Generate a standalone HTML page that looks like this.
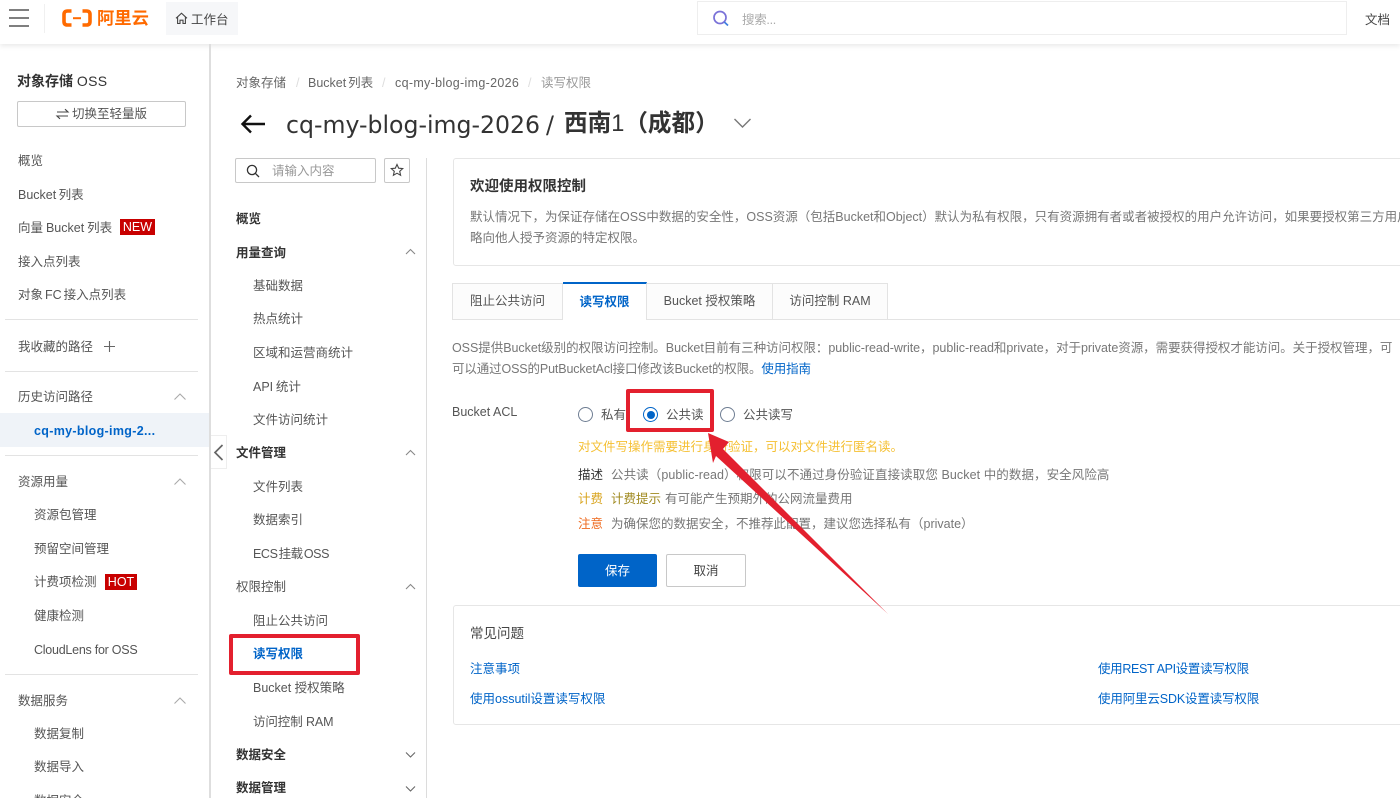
<!DOCTYPE html>
<html lang="zh-CN"><head><meta charset="utf-8"><title>读写权限</title>
<style>
html,body{margin:0;padding:0;background:#fff}
#p{position:relative;width:1400px;height:798px;overflow:hidden;background:#fff;font-family:"Liberation Sans","Noto Sans CJK SC",sans-serif;font-size:12.5px;color:#555}
.t{position:absolute;white-space:nowrap;line-height:18px;height:18px;margin-top:1px}
.b{font-weight:700;color:#333}
.l{color:#0064c8}
.g{color:#777}
.box{position:absolute;box-sizing:border-box}
.hr{position:absolute;height:1px;background:#e3e3e3}
svg{position:absolute;overflow:visible}
.tab{position:absolute;top:283px;height:37px;box-sizing:border-box;border:1px solid #e3e3e3;border-left:0;background:#fcfcfc;line-height:35px;text-align:center;color:#555}
.tag{position:absolute;background:#c80000;color:#fff;line-height:16px;height:16px;text-align:center;font-size:12.5px}
.rad{position:absolute;width:15px;height:15px;box-sizing:border-box;border:1px solid #6e7d92;border-radius:50%;background:#fff}
</style></head><body><div id="p">

<!-- top bar -->
<div class="box" style="left:0;top:0;width:1400px;height:44px;background:#fff;box-shadow:0 2px 5px rgba(0,0,0,.09)"></div>
<svg style="left:0;top:0" width="60" height="44" fill="none" stroke="#555" stroke-width="1.5"><path d="M9 10H29M9 18H29M9 26H29"/></svg>
<div class="box" style="left:44px;top:4px;width:1px;height:29px;background:#f0f0f0"></div>
<svg style="left:62px;top:9px" width="32" height="19" fill="none" stroke="#ff6a00" stroke-width="3.6"><path d="M9.5 2H5.5Q2 2 2 5.5V12.5Q2 16 5.5 16H9.5"/><path d="M20.5 2H24.5Q28 2 28 5.5V12.5Q28 16 24.5 16H20.5"/><path d="M11 9.2H19" stroke-width="2"/></svg>
<div class="t" style="left:97px;top:5px;font-size:17.3px;line-height:24px;height:24px;color:#ff6a00;font-weight:700">阿里云</div>
<div class="box" style="left:166px;top:2px;width:72px;height:33px;background:#f6f7f9"></div>
<svg style="left:175px;top:12px" width="13" height="13" fill="none" stroke="#444" stroke-width="1.1"><path d="M1 6.3L6.5 1.2L12 6.3M2.6 5.2V11.5H5V8.2H8V11.5H10.4V5.2"/></svg>
<div class="t" style="left:191px;top:10px;color:#444;font-size:12.5px">工作台</div>
<div class="box" style="left:697px;top:1px;width:650px;height:34px;border:1px solid #eee;background:#fff"></div>
<svg style="left:712px;top:10px" width="18" height="18" fill="none" stroke-width="1.7"><circle cx="8" cy="7.5" r="6" stroke="#7a72d8"/><path d="M12.3 12L16 15.5" stroke="#3e7fe0"/></svg>
<div class="t" style="left:742px;top:10px;color:#aaa;letter-spacing:-.3px">搜索...</div>
<div class="t" style="left:1365px;top:10px;color:#444">文档</div>

<!-- dividers -->
<div class="box" style="left:209px;top:44px;width:2px;height:754px;background:#dedede"></div>
<div class="box" style="left:426px;top:158px;width:1px;height:640px;background:#dcdcdc"></div>

<!-- left sidebar -->
<div class="t" style="left:17px;top:71px;font-size:14px;font-weight:700;color:#333">对象存储 <span style="font-weight:400;letter-spacing:.3px">OSS</span></div>
<div class="box" style="left:17px;top:101px;width:169px;height:26px;border:1px solid #c8c8c8;border-radius:2px;background:#fff"></div>
<svg style="left:56px;top:108px" width="13" height="12" fill="none" stroke="#444" stroke-width="1.1"><path d="M1 4H12L9 1.2M12 8H1L4 10.8"/></svg>
<div class="t" style="left:72px;top:104px;color:#555">切换至轻量版</div>
<div class="t" style="left:18px;top:151px">概览</div>
<div class="t" style="left:18px;top:185px;word-spacing:-1px">Bucket 列表</div>
<div class="t" style="left:18px;top:218px;word-spacing:-.5px">向量 Bucket 列表</div>
<div class="tag" style="left:120px;top:219px;width:35px">NEW</div>
<div class="t" style="left:18px;top:252px">接入点列表</div>
<div class="t" style="left:18px;top:285px;word-spacing:-1.5px">对象 FC 接入点列表</div>
<div class="hr" style="left:5px;top:319px;width:193px"></div>
<div class="t" style="left:18px;top:337px">我收藏的路径</div>
<svg style="left:103px;top:340px" width="13" height="13" fill="none" stroke="#666" stroke-width="1.1"><path d="M6.5 1V12M1 6.5H12"/></svg>
<div class="hr" style="left:5px;top:371px;width:193px"></div>
<div class="t" style="left:18px;top:387px">历史访问路径</div>
<svg style="left:173px;top:392px" width="14" height="9" fill="none" stroke="#aaa" stroke-width="1.1"><path d="M1.5 7.5L7 2L12.5 7.5"/></svg>
<div class="box" style="left:0;top:413px;width:209px;height:34px;background:#eff3f8"></div>
<div class="t b l" style="left:34px;top:421px;color:#0064c8;letter-spacing:.32px">cq-my-blog-img-2...</div>
<div class="hr" style="left:5px;top:455px;width:193px"></div>
<div class="t" style="left:18px;top:472px">资源用量</div>
<svg style="left:173px;top:477px" width="14" height="9" fill="none" stroke="#aaa" stroke-width="1.1"><path d="M1.5 7.5L7 2L12.5 7.5"/></svg>
<div class="t" style="left:34px;top:505px">资源包管理</div>
<div class="t" style="left:34px;top:539px">预留空间管理</div>
<div class="t" style="left:34px;top:572px">计费项检测</div>
<div class="tag" style="left:105px;top:574px;width:32px">HOT</div>
<div class="t" style="left:34px;top:606px">健康检测</div>
<div class="t" style="left:34px;top:640px;letter-spacing:-.25px">CloudLens for OSS</div>
<div class="hr" style="left:5px;top:674px;width:193px"></div>
<div class="t" style="left:18px;top:691px">数据服务</div>
<svg style="left:173px;top:696px" width="14" height="9" fill="none" stroke="#aaa" stroke-width="1.1"><path d="M1.5 7.5L7 2L12.5 7.5"/></svg>
<div class="t" style="left:34px;top:724px">数据复制</div>
<div class="t" style="left:34px;top:757px">数据导入</div>
<div class="t" style="left:34px;top:791px">数据安全</div>

<!-- breadcrumb + title -->
<div class="t" style="left:236px;top:73px;color:#666">对象存储</div>
<div class="t" style="left:296px;top:73px;color:#ddd">/</div>
<div class="t" style="left:308px;top:73px;color:#666;word-spacing:-1.5px">Bucket 列表</div>
<div class="t" style="left:382px;top:73px;color:#ddd">/</div>
<div class="t" style="left:395px;top:73px;color:#666;letter-spacing:.32px">cq-my-blog-img-2026</div>
<div class="t" style="left:528px;top:73px;color:#ddd">/</div>
<div class="t" style="left:541px;top:73px;color:#999">读写权限</div>
<svg style="left:240px;top:113px" width="26" height="22" fill="none" stroke="#111" stroke-width="2.4"><path d="M25 11H2M11 2.5L2.5 11L11 19.5"/></svg>
<div class="t" style="left:286px;top:108px;font-family:'DejaVu Sans',sans-serif;font-size:23.6px;line-height:32px;height:32px;color:#333">cq-my-blog-img-2026</div>
<div class="t" style="left:546px;top:108px;font-family:'DejaVu Sans',sans-serif;font-size:23.6px;line-height:32px;height:32px;color:#333">/</div>
<div class="t" style="left:564px;top:107px;font-size:23.6px;line-height:32px;height:32px;color:#333;font-weight:700">西南<span style="font-weight:400">1</span>（成都）</div>
<svg style="left:733px;top:117px" width="19" height="12" fill="none" stroke="#777" stroke-width="1.4"><path d="M1.5 2L9.5 10L17.5 2"/></svg>

<!-- middle nav -->
<div class="box" style="left:235px;top:158px;width:141px;height:25px;border:1px solid #c8c8c8;border-radius:2px"></div>
<svg style="left:246px;top:164px" width="14" height="14" fill="none" stroke="#333" stroke-width="1.3"><circle cx="6" cy="6" r="4.6"/><path d="M9.3 9.3L13 13"/></svg>
<div class="t" style="left:272px;top:161px;color:#999">请输入内容</div>
<div class="box" style="left:384px;top:158px;width:26px;height:25px;border:1px solid #c8c8c8;border-radius:2px"></div>
<svg style="left:390px;top:163px" width="14" height="14" fill="none" stroke="#444" stroke-width="1.1"><path d="M7 1.5L8.7 5.2L12.7 5.6L9.7 8.3L10.6 12.3L7 10.2L3.4 12.3L4.3 8.3L1.3 5.6L5.3 5.2Z"/></svg>

<div class="t b" style="left:236px;top:209px">概览</div>
<div class="t b" style="left:236px;top:243px">用量查询</div>
<svg style="left:405px;top:248px" width="11" height="7" fill="none" stroke="#888" stroke-width="1.1"><path d="M1 6L5.5 1.5L10 6"/></svg>
<div class="t" style="left:253px;top:276px">基础数据</div>
<div class="t" style="left:253px;top:309px">热点统计</div>
<div class="t" style="left:253px;top:343px">区域和运营商统计</div>
<div class="t" style="left:253px;top:377px;word-spacing:-.8px">API 统计</div>
<div class="t" style="left:253px;top:410px">文件访问统计</div>
<div class="t b" style="left:236px;top:443px">文件管理</div>
<svg style="left:405px;top:449px" width="11" height="7" fill="none" stroke="#888" stroke-width="1.1"><path d="M1 6L5.5 1.5L10 6"/></svg>
<div class="t" style="left:253px;top:477px">文件列表</div>
<div class="t" style="left:253px;top:510px">数据索引</div>
<div class="t" style="left:253px;top:544px;word-spacing:-2px;letter-spacing:-.4px">ECS 挂载 OSS</div>
<div class="t" style="left:236px;top:577px">权限控制</div>
<svg style="left:405px;top:583px" width="11" height="7" fill="none" stroke="#888" stroke-width="1.1"><path d="M1 6L5.5 1.5L10 6"/></svg>
<div class="t" style="left:253px;top:611px">阻止公共访问</div>
<div class="t b" style="left:253px;top:644px;color:#0064c8">读写权限</div>
<div class="t" style="left:253px;top:678px">Bucket 授权策略</div>
<div class="t" style="left:253px;top:712px;letter-spacing:-.1px">访问控制 RAM</div>
<div class="t b" style="left:236px;top:745px">数据安全</div>
<svg style="left:405px;top:751px" width="11" height="7" fill="none" stroke="#666" stroke-width="1.1"><path d="M1 1.5L5.5 6L10 1.5"/></svg>
<div class="t b" style="left:236px;top:778px">数据管理</div>
<svg style="left:405px;top:785px" width="11" height="7" fill="none" stroke="#666" stroke-width="1.1"><path d="M1 1.5L5.5 6L10 1.5"/></svg>

<!-- collapse tab -->
<div class="box" style="left:211px;top:435px;width:16px;height:34px;background:#fff;border:1px solid #eee;border-left:0"></div>
<svg style="left:213px;top:444px" width="12" height="17" fill="none" stroke="#666" stroke-width="1.7"><path d="M9.5 1L2 8.5L9.5 16"/></svg>

<!-- welcome card -->
<div class="box" style="left:453px;top:158px;width:960px;height:108px;border:1px solid #e6e6e6;border-radius:3px"></div>
<div class="t b" style="left:470px;top:177px;font-size:14.5px;color:#333">欢迎使用权限控制</div>
<div class="t g" style="left:470px;top:207px">默认情况下，为保证存储在OSS中数据的安全性，OSS资源（包括Bucket和Object）默认为私有权限，只有资源拥有者或者被授权的用户允许访问，如果要授权第三方用户</div>
<div class="t g" style="left:470px;top:228px">略向他人授予资源的特定权限。</div>

<!-- tabs -->
<div class="hr" style="left:452px;top:319px;width:948px"></div>
<div class="tab" style="left:452px;width:111px;border-left:1px solid #e3e3e3">阻止公共访问</div>
<div class="tab" style="left:563px;width:84px;top:282px;height:38px;background:#fff;border-top:2px solid #0064c8;border-bottom:0;color:#0064c8;font-weight:700;line-height:36px">读写权限</div>
<div class="tab" style="left:647px;width:126px">Bucket 授权策略</div>
<div class="tab" style="left:773px;width:115px">访问控制 RAM</div>

<div class="t g" style="left:452px;top:338px;letter-spacing:-.04px">OSS提供Bucket级别的权限访问控制。Bucket目前有三种访问权限：public-read-write，public-read和private，对于private资源，需要获得授权才能访问。关于授权管理，可</div>
<div class="t g" style="left:452px;top:359px;letter-spacing:-.13px">可以通过OSS的PutBucketAcl接口修改该Bucket的权限。<span class="l">使用指南</span></div>

<!-- ACL form -->
<div class="t" style="left:452px;top:402px">Bucket ACL</div>
<div class="rad" style="left:578px;top:407px"></div>
<div class="t" style="left:601px;top:405px">私有</div>
<div class="rad" style="left:643px;top:407px;border-color:#0064c8"></div>
<div class="box" style="left:646.5px;top:410.5px;width:8px;height:8px;border-radius:50%;background:#0064c8"></div>
<div class="t" style="left:666px;top:405px">公共读</div>
<div class="rad" style="left:720px;top:407px"></div>
<div class="t" style="left:743px;top:405px">公共读写</div>
<div class="t" style="left:578px;top:437px;color:#f5c033">对文件写操作需要进行身份验证，可以对文件进行匿名读。</div>
<div class="t" style="left:578px;top:465px;color:#333">描述</div>
<div class="t g" style="left:611px;top:465px;letter-spacing:.08px">公共读（public-read）权限可以不通过身份验证直接读取您 Bucket 中的数据，安全风险高</div>
<div class="t" style="left:578px;top:489px;color:#d9a520">计费</div>
<div class="t" style="left:611px;top:489px;color:#a08a20">计费提示</div>
<div class="t g" style="left:665px;top:489px">有可能产生预期外的公网流量费用</div>
<div class="t" style="left:578px;top:514px;color:#ee6a1f">注意</div>
<div class="t g" style="left:611px;top:514px">为确保您的数据安全，不推荐此配置，建议您选择私有（private）</div>
<div class="box" style="left:578px;top:554px;width:79px;height:33px;background:#0064c8;border-radius:2px;color:#fff;text-align:center;line-height:35px">保存</div>
<div class="box" style="left:666px;top:554px;width:80px;height:33px;border:1px solid #c8c8c8;border-radius:2px;color:#444;text-align:center;line-height:33px">取消</div>

<!-- FAQ -->
<div class="box" style="left:453px;top:605px;width:960px;height:120px;border:1px solid #e6e6e6;border-radius:3px"></div>
<div class="t" style="left:470px;top:624px;font-size:13.5px;color:#444">常见问题</div>
<div class="t l" style="left:470px;top:659px">注意事项</div>
<div class="t l" style="left:1098px;top:659px;letter-spacing:-.33px">使用REST API设置读写权限</div>
<div class="t l" style="left:470px;top:689px">使用ossutil设置读写权限</div>
<div class="t l" style="left:1098px;top:689px;letter-spacing:-.15px">使用阿里云SDK设置读写权限</div>

<!-- annotations -->
<div class="box" style="left:626px;top:389px;width:88px;height:43px;border:4px solid #e3202e;border-radius:2px"></div>
<div class="box" style="left:229px;top:634px;width:131px;height:41px;border:4px solid #e3202e;border-radius:2px"></div>
<svg style="left:0;top:0" width="1400" height="798"><polygon points="708,433 729,442 723,449 888,614 716,456 713,463" fill="#e3202e"/></svg>

</div></body></html>
